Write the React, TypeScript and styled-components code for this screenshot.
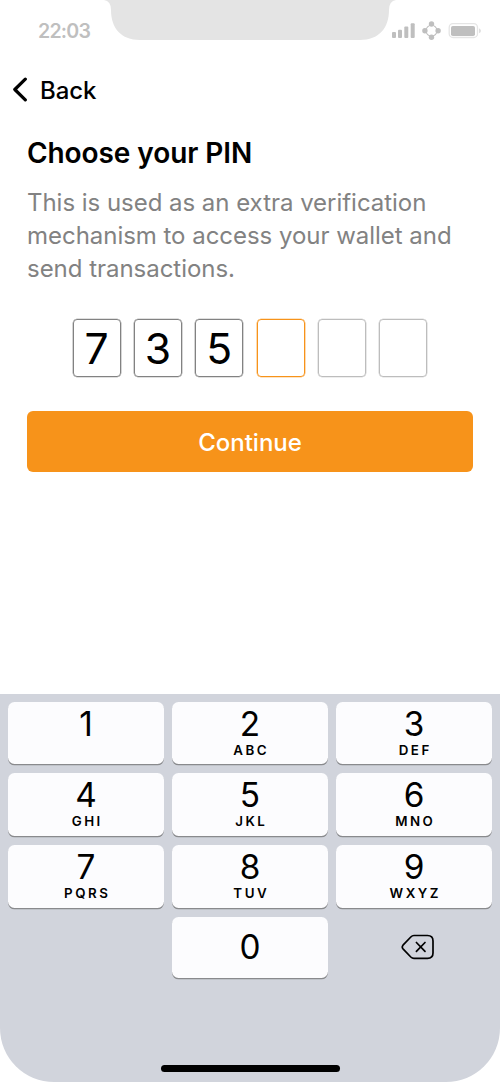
import React from "react";
import styled, { createGlobalStyle } from "styled-components";

const GlobalStyle = createGlobalStyle`
  *, *::before, *::after { box-sizing: border-box; }
  body { margin: 0; background: #fff; font-family: Inter, "Liberation Sans", sans-serif; color: #000; }
  button { font: inherit; color: inherit; border: 0; padding: 0; background: none; }
`;

const Screen = styled.main`
  width: 500px;
  height: 1083px;
  display: flex;
  flex-direction: column;
  overflow: hidden;
  background: #fff;
`;

const StatusBar = styled.header`
  height: 59px;
  display: grid;
  grid-template-columns: 104px 292px 104px;
  align-items: start;
`;

const Clock = styled.time`
  padding-left: 38px;
  margin-top: 19px;
  font-size: 19.6px;
  line-height: 24px;
  font-weight: 600;
  letter-spacing: -0.8px;
  color: #bfbfbf;
`;

const StatusIcons = styled.svg`
  display: block;
  margin: 19px 0 0 -6px;
`;

const BackButton = styled.button`
  height: 62px;
  display: flex;
  align-items: center;
  gap: 12px;
  padding-left: 12px;
  font-size: 24px;
  line-height: 29px;
  font-weight: 500;
  letter-spacing: -0.1px;

  span { padding-top: 1px; }
`;

const Content = styled.section`
  flex: 1;
  display: flex;
  flex-direction: column;
  padding: 15px 27px 0;
`;

const Title = styled.h1`
  margin: 0;
  font-size: 28px;
  line-height: 34px;
  font-weight: 600;
  letter-spacing: -0.08px;
`;

const Description = styled.p`
  margin: 16px 0 0;
  font-size: 24px;
  line-height: 33px;
  letter-spacing: -0.03px;
  color: #828282;
`;

const PinRow = styled.div`
  display: flex;
  gap: 13.33px;
  margin: 34px 0 0 45.67px;
`;

type PinState = "filled" | "active" | "empty";
const pinColor: Record<PinState, string> = { filled: "#828282", active: "#f7931a", empty: "#bdbdbd" };

const PinCell = styled.div<{ $state: PinState }>`
  width: 48px;
  height: 58px;
  display: flex;
  align-items: center;
  justify-content: center;
  border: 1px solid ${(p) => pinColor[p.$state]};
  border-radius: 4px;
  box-shadow: 0 0 0 0.33px ${(p) => pinColor[p.$state]};
  padding-top: 1px;
  font-size: 42.67px;
  line-height: 55px;
`;

const Continue = styled.button`
  height: 61px;
  margin-top: 34px;
  padding-top: 2px;
  border-radius: 6px;
  background: #f7931a;
  color: #fff;
  font-size: 24px;
  font-weight: 500;
`;

const Keyboard = styled.section`
  height: 388px;
  margin-bottom: 1px;
  display: flex;
  flex-direction: column;
  align-items: center;
  justify-content: space-between;
  padding: 8px 8px 10px;
  background: #d1d4dc;
  border-radius: 0 0 54px 54px;
`;

const KeyGrid = styled.div`
  width: 100%;
  display: grid;
  grid-template-columns: repeat(3, 156px);
  grid-template-rows: 62px 63px 63px 61px;
  gap: 9px 8px;
`;

const Key = styled.button<{ $centered?: boolean }>`
  display: flex;
  flex-direction: column;
  align-items: center;
  justify-content: ${(p) => (p.$centered ? "center" : "flex-start")};
  padding: ${(p) => (p.$centered ? "0 0 1px" : "2px 0 0")};
  border-radius: 6.5px;
  background: #fcfcfe;
  box-shadow: 0 1.33px 0 #898a8d;
`;

const Digit = styled.span`
  font-size: 33.33px;
  line-height: 40px;
`;

const Letters = styled.span`
  font-size: 13.33px;
  line-height: 14px;
  margin-top: -1px;
  font-weight: 600;
  letter-spacing: 2.5px;
  margin-right: -2.5px;
`;

const DeleteKey = styled.button`
  grid-column: 3;
  display: flex;
  align-items: center;
  justify-content: center;
  padding: 0 0 2px 7px;
`;

const HomeIndicator = styled.div`
  width: 179px;
  height: 7px;
  border-radius: 4px;
  background: #000;
`;

const pin = ["7", "3", "5", "", "", ""];
const keys: [string, string][] = [
  ["1", ""], ["2", "ABC"], ["3", "DEF"],
  ["4", "GHI"], ["5", "JKL"], ["6", "MNO"],
  ["7", "PQRS"], ["8", "TUV"], ["9", "WXYZ"],
];

export default function App() {
  const active = pin.indexOf("");
  return (
    <>
      <GlobalStyle />
      <Screen>
        <StatusBar>
          <Clock>22:03</Clock>
          <svg width="292" height="41" viewBox="0 0 292 41">
            <path d="M0 0H292Q285 1 285 10C285 28 275 40 256 40H36C17 40 7 28 7 10Q7 1 0 0Z" fill="#e4e4e4" />
          </svg>
          <StatusIcons width="92" height="24" viewBox="0 0 92 24">
            <g fill="#bfbfbf">
              <rect x="2" y="13" width="4" height="6" rx="1" />
              <rect x="8" y="10.7" width="4" height="8.3" rx="1" />
              <rect x="14.3" y="7.6" width="4" height="11.4" rx="1" />
              <rect x="20.7" y="4.3" width="4" height="14.7" rx="1" />
              <circle cx="41.5" cy="5" r="2.7" />
              <circle cx="41.5" cy="18.3" r="2.7" />
              <circle cx="34.9" cy="11.7" r="2.7" />
              <circle cx="48.1" cy="11.7" r="2.7" />
            </g>
            <circle cx="41.5" cy="11.7" r="5.5" fill="none" stroke="#bfbfbf" strokeWidth="1.1" />
            <rect x="59.2" y="4.7" width="28.3" height="13.8" rx="3.8" fill="none" stroke="#e5e5e5" strokeWidth="1.3" />
            <rect x="61" y="7" width="24" height="10" rx="1.8" fill="#bfbfbf" />
            <path d="M89 9.2Q91 10.2 91 11.7T89 14.2Z" fill="#dedede" />
          </StatusIcons>
        </StatusBar>
        <BackButton>
          <svg width="16" height="26" viewBox="0 0 16 26" fill="none" stroke="#000" strokeWidth="3.2" strokeLinecap="round" strokeLinejoin="round">
            <path d="M13.3 2.2 2.8 12.5 13.3 22.9" />
          </svg>
          <span>Back</span>
        </BackButton>
        <Content>
          <Title>Choose your PIN</Title>
          <Description>
            This is used as an extra verification
            <br />
            mechanism to access your wallet and
            <br />
            send transactions.
          </Description>
          <PinRow>
            {pin.map((digit, i) => (
              <PinCell key={i} $state={digit ? "filled" : i === active ? "active" : "empty"}>
                {digit}
              </PinCell>
            ))}
          </PinRow>
          <Continue>Continue</Continue>
        </Content>
        <Keyboard>
          <KeyGrid>
            {keys.map(([digit, letters]) => (
              <Key key={digit}>
                <Digit>{digit}</Digit>
                {letters && <Letters>{letters}</Letters>}
              </Key>
            ))}
            <span />
            <Key $centered>
              <Digit>0</Digit>
            </Key>
            <DeleteKey aria-label="Delete">
              <svg width="34" height="26" viewBox="0 0 34 26" fill="none" stroke="#000" strokeWidth="1.7" strokeLinecap="round" strokeLinejoin="round">
                <path d="M13 1.5H26.5Q32 1.5 32 7V19Q32 24.3 26.5 24.3H13Q11.2 24.3 9.8 23L2 14.8Q.5 13 2 11.2L9.8 3Q11.2 1.5 13 1.5Z" />
                <path d="M15.4 8.5 24 17.3M24 8.5 15.4 17.3" />
              </svg>
            </DeleteKey>
          </KeyGrid>
          <HomeIndicator />
        </Keyboard>
      </Screen>
    </>
  );
}
